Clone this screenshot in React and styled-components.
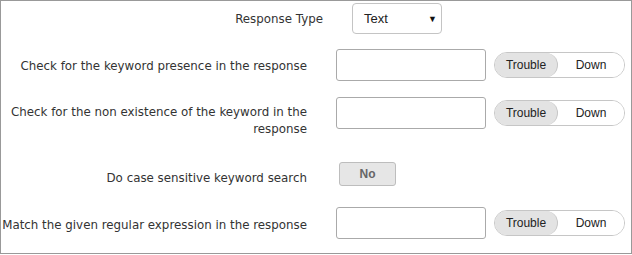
import React from "react";
import styled, { createGlobalStyle } from "styled-components";

const Global = createGlobalStyle`
  html, body { margin: 0; padding: 0; background: #fff; }
  * { box-sizing: border-box; }
`;

const Panel = styled.div`
  width: 632px;
  height: 254px;
  border: 1px solid #999;
  padding-top: 2px;
  display: flex;
  flex-direction: column;
  font-family: "DejaVu Sans", Verdana, sans-serif;
  font-size: 11.85px;
  color: #333;
`;

const Row = styled.div`
  display: grid;
  grid-template-columns: ${(p) => p.$labelWidth}px auto;
  column-gap: 29px;
  align-items: ${(p) => (p.$multi ? "start" : "center")};
  align-content: start;
  height: ${(p) => p.$height}px;
`;

const Label = styled.div`
  display: flex;
  justify-content: flex-end;
  text-align: right;
  line-height: 17px;
  white-space: ${(p) => (p.$wrap ? "normal" : "nowrap")};
  padding-top: ${(p) => p.$top ?? 4}px;
`;

const Controls = styled.div`
  display: flex;
  align-items: center;
  gap: 8px;
`;

const SelectBox = styled.div`
  width: 90px;
  height: 31px;
  border: 1px solid #c4c4c4;
  border-radius: 4px;
  display: flex;
  align-items: center;
  justify-content: space-between;
  padding: 0 4px 0 11px;
  font-family: "Liberation Sans", Arial, sans-serif;
  font-size: 13px;
  color: #222;
`;

const Arrow = styled.span`
  font-size: 9px;
  color: #111;
`;

const TextInput = styled.input`
  width: 150px;
  height: 32px;
  border: 1px solid #aaa;
  border-radius: 3px;
  margin: 0;
  padding: 0 6px;
  background: #fff;
`;

const Toggle = styled.div`
  width: 131px;
  height: 26px;
  border: 1px solid #c6c6c6;
  border-radius: 13px;
  display: flex;
  overflow: hidden;
  font-family: "Liberation Sans", Arial, sans-serif;
  font-size: 12px;
  color: #222;
`;

const Segment = styled.div`
  flex: 0 0 ${(p) => p.$w}px;
  display: flex;
  align-items: center;
  justify-content: center;
  background: ${(p) => (p.$active ? "#e3e3e3" : "#fff")};
  border-right: ${(p) => (p.$active ? "1px solid #c6c6c6" : "none")};
  border-radius: ${(p) => (p.$active ? "0 13px 13px 0" : "0")};
`;

const NoButton = styled.div`
  margin-left: 3px;
  width: 57px;
  height: 24px;
  border: 1px solid #bdbdbd;
  border-radius: 3px;
  background: #e6e6e6;
  display: flex;
  align-items: center;
  justify-content: center;
  font-family: "Liberation Sans", Arial, sans-serif;
  font-size: 12px;
  font-weight: bold;
  color: #666;
`;

const TroubleDown = () => (
  <Toggle>
    <Segment $w={63} $active>Trouble</Segment>
    <Segment $w={66}>Down</Segment>
  </Toggle>
);

export default function App() {
  return (
    <>
      <Global />
      <Panel>
        <Row $labelWidth={322} $height={46}>
          <Label $top={2}>Response Type</Label>
          <SelectBox>
            <span>Text</span>
            <Arrow>▼</Arrow>
          </SelectBox>
        </Row>
        <Row $labelWidth={306} $height={48}>
          <Label>Check for the keyword presence in the response</Label>
          <Controls>
            <TextInput />
            <TroubleDown />
          </Controls>
        </Row>
        <Row $labelWidth={306} $height={65} $multi>
          <Label $wrap $top={7}>
            Check for the non existence of the keyword in the response
          </Label>
          <Controls>
            <TextInput />
            <TroubleDown />
          </Controls>
        </Row>
        <Row $labelWidth={306} $height={46}>
          <Label $top={9}>Do case sensitive keyword search</Label>
          <NoButton>No</NoButton>
        </Row>
        <Row $labelWidth={306} $height={46}>
          <Label>Match the given regular expression in the response</Label>
          <Controls>
            <TextInput />
            <TroubleDown />
          </Controls>
        </Row>
      </Panel>
    </>
  );
}
